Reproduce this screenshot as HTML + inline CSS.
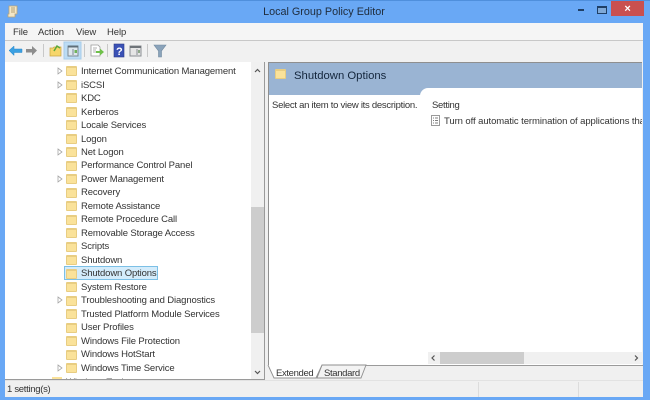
<!DOCTYPE html>
<html><head><meta charset="utf-8"><style>
html,body{margin:0;padding:0;width:650px;height:400px;overflow:hidden;background:#69a8f5;font-family:"Liberation Sans",sans-serif;font-size:9.5px;letter-spacing:-.08px;color:#333}
div{position:absolute;white-space:nowrap}
svg{position:absolute;overflow:visible}
.r{left:81px;height:13px;line-height:13px;letter-spacing:-.13px}
.f{position:absolute;left:66px;width:9px;height:7px;background:#fae29a;border:1px solid #e8cd82;border-top-width:2px;border-radius:1px}
</style></head><body>
<div style="left:0;top:0;width:650px;height:1px;background:#4f8fdc"></div>
<div style="left:-1px;top:5px;width:650px;text-align:center;font-size:10.8px;letter-spacing:0;line-height:15px;color:#1f2c3c">Local Group Policy Editor</div>
<svg style="left:7px;top:5px" width="11" height="13"><path d="M2 1h8v8H8v3H1V9h1z" fill="#f3e7c7" stroke="#b9a477" stroke-width=".8"/><path d="M4 3h4M4 5h4M4 7h4" stroke="#a08a5a" stroke-width=".7"/></svg>
<div style="left:578px;top:9px;width:6px;height:2px;background:#1f3f66"></div>
<div style="left:597px;top:6px;width:8px;height:5px;border:1px solid #1f3f66;border-top-width:2px;background:#7fa9d8"></div>
<div style="left:611px;top:1px;width:33px;height:15px;background:#c9504f"></div>
<div style="left:611px;top:1px;width:33px;height:15px;line-height:16px;text-align:center;color:#fff;font-size:11px;font-weight:bold">×</div>

<div style="left:5px;top:23px;width:638px;height:374px;background:#f0f0f0"></div>
<div style="left:5px;top:23px;width:638px;height:17px;background:#f5f5f5;border-bottom:1px solid #c8c8c8"></div>
<div style="left:13px;top:26px;line-height:13px">File</div>
<div style="left:38px;top:26px;line-height:13px">Action</div>
<div style="left:76px;top:26px;line-height:13px">View</div>
<div style="left:107px;top:26px;line-height:13px">Help</div>

<div style="left:5px;top:41px;width:638px;height:21px;background:#f1f1f1"></div>
<svg style="left:0;top:40px" width="180" height="22">
<path d="M9 10.500l5-4.500v3h8v3.500h-8v3z" fill="#3aa0e2" stroke="#2a86c8" stroke-width=".5"/>
<path d="M37 10.500l-5-4.500v3h-6v3.500h6v3z" fill="#8d8d8d"/>
<path d="M43.500 4v13" stroke="#c8c8c8"/>
<path d="M50 8h3l1-1h7v9H50z" fill="#f6d66b" stroke="#c9a544" stroke-width=".7"/>
<path d="M54 11l3-5 3 2" fill="none" stroke="#5aa83a" stroke-width="1.500"/>
<rect x="64" y="2" width="17" height="17" fill="#bcdcf4" stroke="#a7cdea"/>
<rect x="68" y="6" width="10" height="10" fill="#dfe8ee" stroke="#7c8a94"/><path d="M68 6.500h10" stroke="#5f6f7a" stroke-width="2"/><path d="M73 9v6" stroke="#7c8a94"/><rect x="74.500" y="10" width="2.500" height="3" fill="#6fb35a"/>
<path d="M84.500 4v13" stroke="#c8c8c8"/>
<path d="M91 5h7l2 2v9h-9z" fill="#fff" stroke="#9a9a9a" stroke-width=".8"/><path d="M93 8h4M93 10h3M93 12h3" stroke="#999" stroke-width=".7"/>
<path d="M96 11h4V8.500l4 3.500-4 3.500V13h-4z" fill="#6fc04a"/>
<path d="M107.500 4v13" stroke="#c8c8c8"/>
<rect x="114" y="4" width="10" height="13" fill="#3a51b5" stroke="#2a3a8a" stroke-width=".6"/>
<text x="116" y="15" font-family="Liberation Sans" font-size="11" font-weight="bold" fill="#fff">?</text>
<rect x="130" y="6" width="11" height="10" fill="#e6e6e6" stroke="#8a8f94"/><path d="M130 7h11" stroke="#6f7479" stroke-width="2"/><path d="M137 9v6" stroke="#8a8f94"/><rect x="138" y="10" width="2" height="3" fill="#8fa88a"/>
<path d="M147.500 4v13" stroke="#c8c8c8"/>
<path d="M154 5h12l-4.500 6v6h-3v-6z" fill="#8aa3ba" stroke="#70899f" stroke-width=".6"/>
</svg>

<div style="left:5px;top:62px;width:259px;height:317px;background:#fff"></div>
<div style="left:5px;top:379px;width:260px;height:1px;background:#9a9a9a"></div>
<div style="left:251px;top:62px;width:13px;height:317px;background:#f0f0f0"></div>
<div style="left:251px;top:207px;width:13px;height:126px;background:#cdcdcd"></div>
<div style="left:264px;top:62px;width:1px;height:318px;background:#9a9a9a"></div>
<svg style="left:251px;top:62px" width="12" height="320"><path d="M4 10l2.500-2.500L9 10M4 309l2.500 2.500L9 309" fill="none" stroke="#555" stroke-width="1.200"/></svg>

<div class="r" style="top:65px">Internet Communication Management</div>
<div class="r" style="top:79px">iSCSI</div>
<div class="r" style="top:92px">KDC</div>
<div class="r" style="top:106px">Kerberos</div>
<div class="r" style="top:119px">Locale Services</div>
<div class="r" style="top:133px">Logon</div>
<div class="r" style="top:146px">Net Logon</div>
<div class="r" style="top:159px">Performance Control Panel</div>
<div class="r" style="top:173px">Power Management</div>
<div class="r" style="top:186px">Recovery</div>
<div class="r" style="top:200px">Remote Assistance</div>
<div class="r" style="top:213px">Remote Procedure Call</div>
<div class="r" style="top:227px">Removable Storage Access</div>
<div class="r" style="top:240px">Scripts</div>
<div class="r" style="top:254px">Shutdown</div>
<div style="left:64px;top:266px;width:92px;height:12px;background:#d4ecfb;border:1px solid #7cc0e6"></div>
<div class="r" style="top:267px">Shutdown Options</div>
<div class="r" style="top:281px">System Restore</div>
<div class="r" style="top:294px">Troubleshooting and Diagnostics</div>
<div class="r" style="top:308px">Trusted Platform Module Services</div>
<div class="r" style="top:321px">User Profiles</div>
<div class="r" style="top:335px">Windows File Protection</div>
<div class="r" style="top:348px">Windows HotStart</div>
<div class="r" style="top:362px">Windows Time Service</div>

<i class="f" style="top:66px"></i><i class="f" style="top:80px"></i><i class="f" style="top:93px"></i><i class="f" style="top:107px"></i><i class="f" style="top:120px"></i><i class="f" style="top:134px"></i><i class="f" style="top:147px"></i><i class="f" style="top:161px"></i><i class="f" style="top:174px"></i><i class="f" style="top:188px"></i><i class="f" style="top:201px"></i><i class="f" style="top:215px"></i><i class="f" style="top:228px"></i><i class="f" style="top:242px"></i><i class="f" style="top:255px"></i><i class="f" style="top:269px"></i><i class="f" style="top:282px"></i><i class="f" style="top:296px"></i><i class="f" style="top:309px"></i><i class="f" style="top:323px"></i><i class="f" style="top:336px"></i><i class="f" style="top:350px"></i><i class="f" style="top:363px"></i>

<svg style="left:56px;top:62px" width="8" height="320"><g fill="#fff" stroke="#a6a6a6" stroke-width=".8"><path d="M2 6l4 3-4 3z"/><path d="M2 20l4 3-4 3z"/><path d="M2 87l4 3-4 3z"/><path d="M2 114l4 3-4 3z"/><path d="M2 235l4 3-4 3z"/><path d="M2 303l4 3-4 3z"/></g></svg>

<div style="left:268px;top:62px;width:374px;height:318px;background:#fff;border-left:1px solid #8f8f8f;border-top:1px solid #8f8f8f;box-sizing:border-box"></div>
<div style="left:269px;top:63px;width:373px;height:32px;background:#9ab4d3"></div>
<div style="left:420px;top:88px;width:222px;height:10px;background:#fff;border-radius:8px 0 0 0"></div>
<i class="f" style="left:275px;top:69px"></i>
<div style="left:294px;top:69px;font-size:11.3px;letter-spacing:0;line-height:15px;color:#14263c">Shutdown Options</div>
<div style="left:272px;top:99px;line-height:13px;letter-spacing:-.27px">Select an item to view its description.</div>
<div style="left:432px;top:99px;line-height:13px;letter-spacing:-.3px">Setting</div>
<svg style="left:431px;top:115px" width="10" height="12"><path d="M.5.500h8v10h-8z" fill="#fff" stroke="#9a9a9a"/><path d="M2 3h1M4 3h3M2 5.500h1M4 5.500h3M2 8h1M4 8h3" stroke="#555" stroke-width=".8"/></svg>
<div style="left:444px;top:115px;width:198px;line-height:13px;overflow:hidden">Turn off automatic termination of applications that block or cancel shutdown</div>

<div style="left:428px;top:352px;width:214px;height:12px;background:#f0f0f0"></div>
<div style="left:440px;top:352px;width:84px;height:12px;background:#cdcdcd"></div>
<svg style="left:428px;top:352px" width="214" height="12"><path d="M6.500 3.500L4 6l2.500 2.500M207 3.500L209.500 6 207 8.500" fill="none" stroke="#555" stroke-width="1.200"/></svg>
<div style="left:268px;top:365px;width:375px;height:15px;background:#f0f0f0"></div>
<div style="left:268px;top:365px;width:375px;height:1px;background:#9a9a9a"></div>
<svg style="left:268px;top:365px" width="110" height="16"><path d="M49 13H93L98 0H54z" fill="#f3f3f3" stroke="#8f8f8f" stroke-width=".9"/><path d="M0 0l6 13h42l6-13" fill="#fff" stroke="#8f8f8f" stroke-width=".9"/><path d="M1 0h52" stroke="#fff" stroke-width="1.200"/></svg>
<div style="left:276px;top:367px;line-height:13px;letter-spacing:-.35px">Extended</div>
<div style="left:324px;top:367px;line-height:13px;letter-spacing:-.35px">Standard</div>

<div style="left:66px;top:376px;height:3px;width:100px;overflow:hidden;color:#555;line-height:13px">Windows Tools</div>
<div style="left:52px;top:377px;width:10px;height:2px;background:#fae29a"></div>
<div style="left:5px;top:380px;width:638px;height:17px;background:#f0f0f0;border-top:1px solid #e2e2e2;box-sizing:border-box"></div>
<div style="left:478px;top:382px;width:1px;height:15px;background:#dcdcdc"></div>
<div style="left:578px;top:382px;width:1px;height:15px;background:#dcdcdc"></div>
<div style="left:7px;top:383px;line-height:13px;letter-spacing:-.3px">1 setting(s)</div>
</body></html>
